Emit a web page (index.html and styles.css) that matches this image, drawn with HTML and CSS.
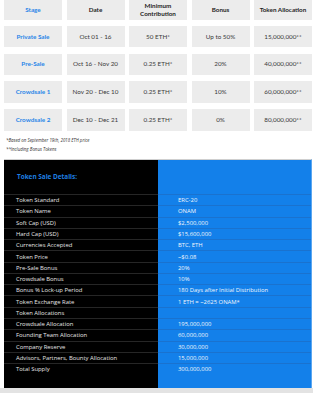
FILE: index.html
```html
<!DOCTYPE html>
<html>
<head>
<meta charset="utf-8">
<link rel="stylesheet" href="styles.css">
</head>
<body>
<div class="page">
  <div class="stages">
    <div class="cell head">Stage</div>
    <div class="cell head">Date</div>
    <div class="cell head">Minimum<br>Contribution</div>
    <div class="cell head">Bonus</div>
    <div class="cell head">Token Allocation</div>

    <div class="cell stage">Private Sale</div>
    <div class="cell">Oct 01 - 16</div>
    <div class="cell">50 ETH*</div>
    <div class="cell">Up to 50%</div>
    <div class="cell">15,000,000**</div>

    <div class="cell stage">Pre-Sale</div>
    <div class="cell">Oct 16 - Nov 20</div>
    <div class="cell">0.25 ETH*</div>
    <div class="cell">20%</div>
    <div class="cell">40,000,000**</div>

    <div class="cell stage">Crowdsale 1</div>
    <div class="cell">Nov 20 - Dec 10</div>
    <div class="cell">0.25 ETH*</div>
    <div class="cell">10%</div>
    <div class="cell">60,000,000**</div>

    <div class="cell stage">Crowdsale 2</div>
    <div class="cell">Dec 10 - Dec 21</div>
    <div class="cell">0.25 ETH*</div>
    <div class="cell">0%</div>
    <div class="cell">80,000,000**</div>
  </div>

  <div class="notes">
    <p>*Based on September 19th, 2018 ETH price</p>
    <p>**Including Bonus Tokens</p>
  </div>

  <div class="details">
    <div class="details-title">Token Sale Details:</div>
    <div class="rows">
      <div class="lbl">Token Standard</div><div class="val">ERC-20</div>
      <div class="lbl">Token Name</div><div class="val">ONAM</div>
      <div class="lbl">Soft Cap (USD)</div><div class="val">$2,500,000</div>
      <div class="lbl">Hard Cap (USD)</div><div class="val">$15,600,000</div>
      <div class="lbl">Currencies Accepted</div><div class="val">BTC, ETH</div>
      <div class="lbl">Token Price</div><div class="val">~$0.08</div>
      <div class="lbl">Pre-Sale Bonus</div><div class="val">20%</div>
      <div class="lbl">Crowdsale Bonus</div><div class="val">10%</div>
      <div class="lbl">Bonus % Lock-up Period</div><div class="val">180 Days after Initial Distribution</div>
      <div class="lbl">Token Exchange Rate</div><div class="val">1 ETH = ~2625 ONAM*</div>
      <div class="lbl">Token Allocations</div><div class="val"></div>
      <div class="lbl">Crowdsale Allocation</div><div class="val">195,000,000</div>
      <div class="lbl">Founding Team Allocation</div><div class="val">60,000,000</div>
      <div class="lbl">Company Reserve</div><div class="val">30,000,000</div>
      <div class="lbl">Advisors, Partners, Bounty Allocation</div><div class="val">15,000,000</div>
      <div class="lbl">Total Supply</div><div class="val">300,000,000</div>
    </div>
  </div>
</div>
<div class="footer-strip"></div>
</body>
</html>
```

FILE: styles.css
```css
html, body {
  margin: 0;
  padding: 0;
  background: #ffffff;
}

body {
  width: 313px;
  height: 393px;
  overflow: hidden;
  font-family: "Lato", "Open Sans", sans-serif;
}

.page {
  padding: 0 1px 0 4px;
  height: 388px;
  box-sizing: border-box;
}

.stages {
  display: grid;
  grid-template-columns: repeat(5, 58px);
  grid-template-rows: 19.5px repeat(4, 21.5px);
  column-gap: 4.5px;
  row-gap: 6.25px;
}

.cell {
  background: #ececec;
  display: flex;
  align-items: center;
  justify-content: center;
  text-align: center;
  font-size: 6.3px;
  line-height: 8px;
  color: #3a3a3a;
  white-space: nowrap;
}

.cell.head {
  font-weight: 700;
  color: #1e1e1e;
}

.cell.head:first-child {
  color: #2a86e8;
}

.cell.stage {
  font-weight: 700;
  color: #2a86e8;
}

.notes {
  margin: 5px 0 5px 2px;
  font-family: "Open Sans", sans-serif;
  font-style: italic;
  font-size: 4.4px;
  line-height: 9.3px;
  color: #333;
}

.notes p {
  margin: 0;
}

.details {
  width: 308px;
  height: 229px;
  box-sizing: border-box;
  border-top: 1px solid #cfcfcf;
  border-right: 1px solid #5aa6f0;
  background: linear-gradient(to right, #000000 0, #000000 154px, #1380ea 154px, #1380ea 100%);
  padding-top: 11px;
  font-family: "Open Sans", sans-serif;
}

.details-title {
  padding-left: 13px;
  font-weight: 700;
  font-size: 6.4px;
  line-height: 12px;
  color: #1f7fe0;
  margin-bottom: 11px;
}

.rows {
  display: grid;
  grid-template-columns: 154px 1fr;
  grid-auto-rows: 11.27px;
}

.lbl, .val {
  box-sizing: border-box;
  font-size: 5.9px;
  line-height: 10px;
  white-space: nowrap;
  display: flex;
  align-items: center;
}

.lbl {
  padding-left: 12px;
  color: #e6e6e6;
  border-top: 1px solid #262626;
}

.val {
  padding-left: 20px;
  color: #f2f6fb;
  border-top: 1px solid #1a72cf;
}

.footer-strip {
  height: 5px;
  background: #e3e3e3;
}
```
